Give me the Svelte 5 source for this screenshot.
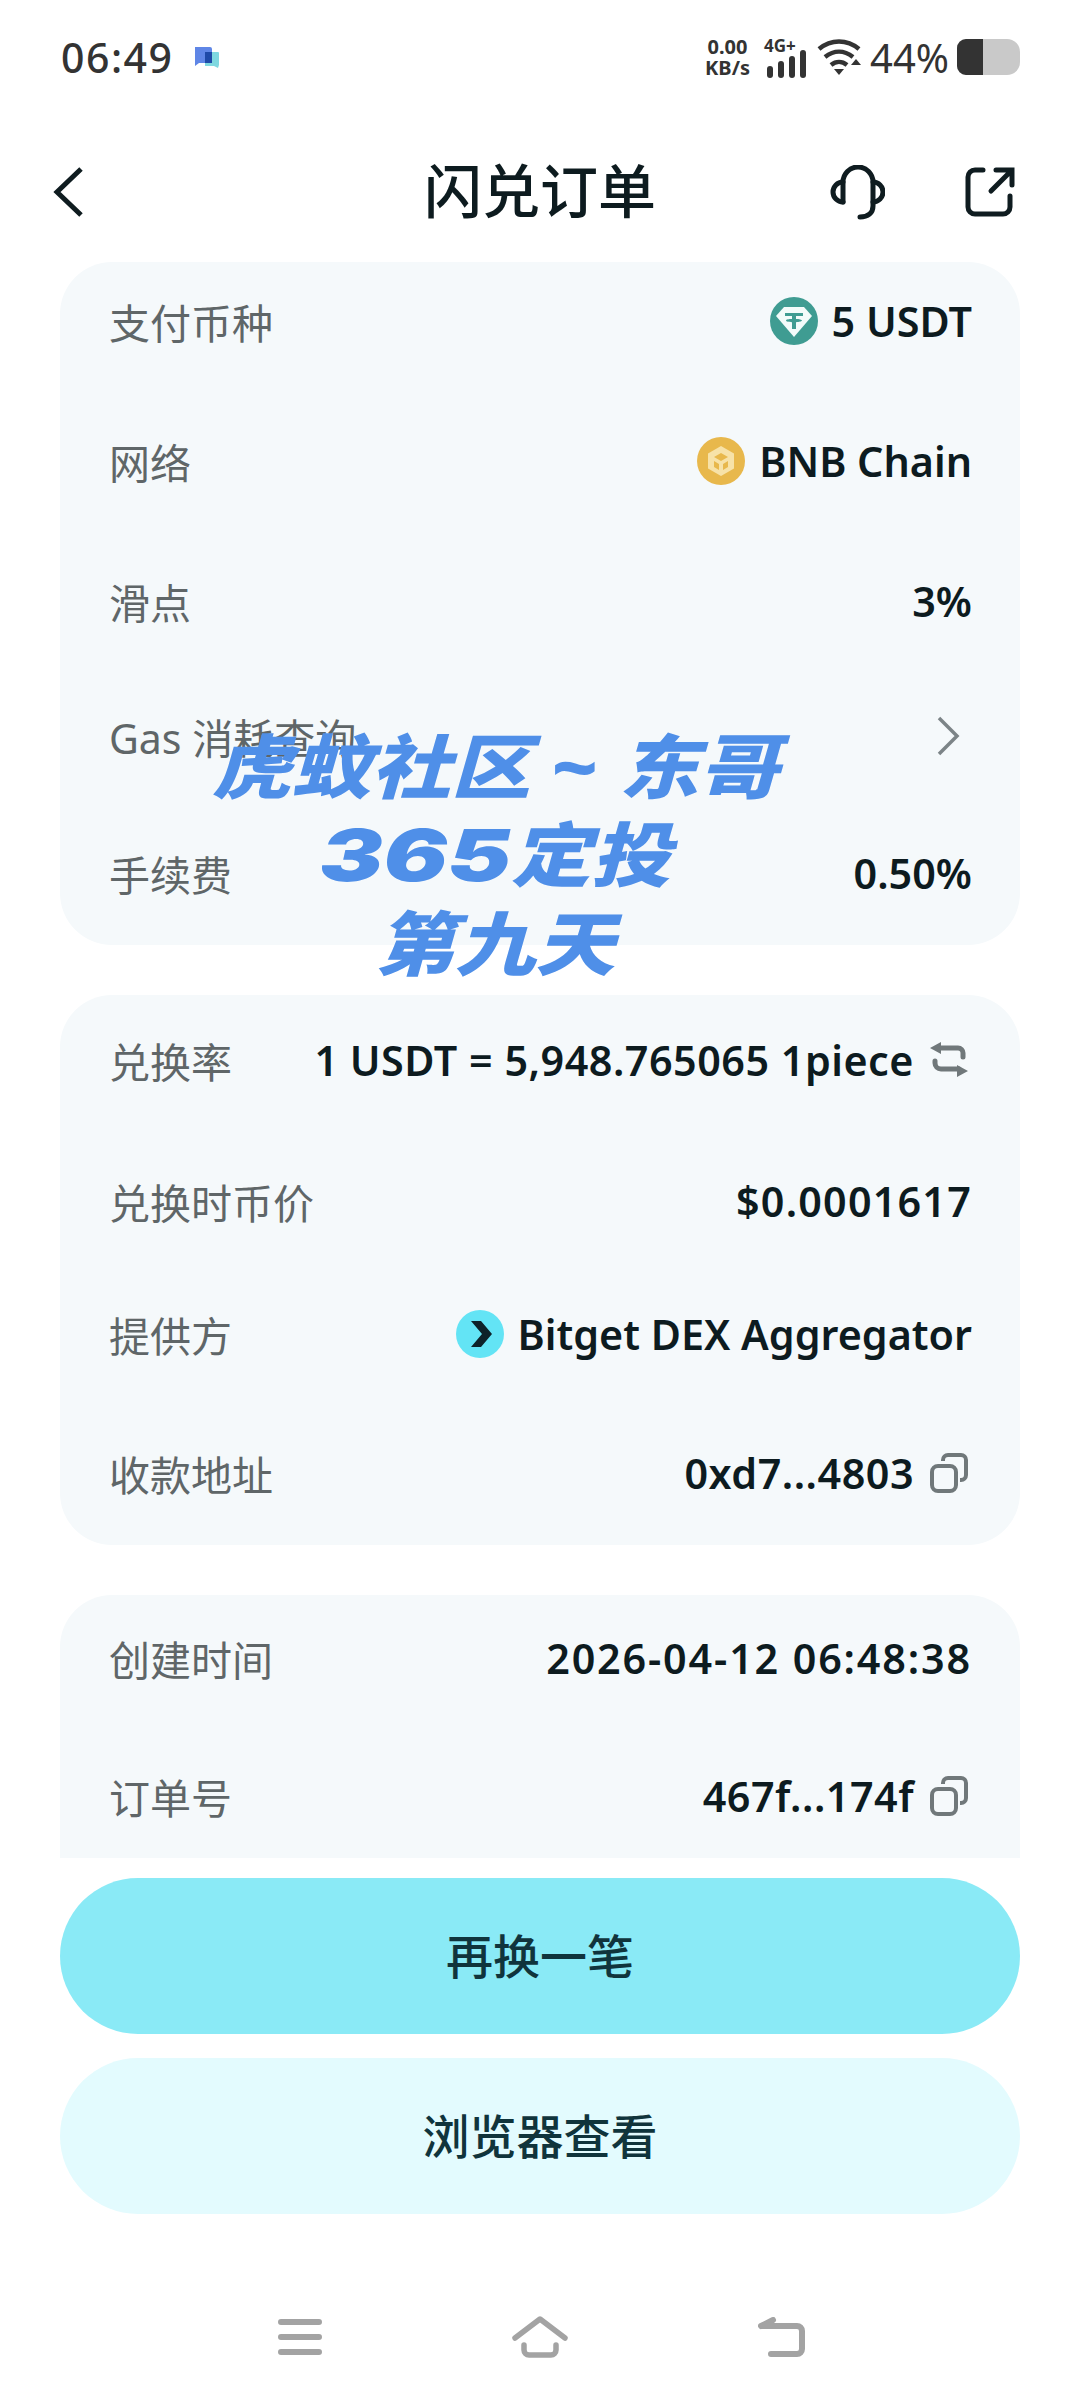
<script lang="ts">
  type Row = { label: string; value?: string; mt: number; icon?: string; after?: string; ls?: number };

  // mt is the space above each 100px row, the list rows are not evenly spaced
  // ls widens the digit-heavy values a little
  const cards: Row[][] = [
    [
      { label: '支付币种', value: '5 USDT', mt: 11, icon: 'usdt' },
      { label: '网络', value: 'BNB Chain', mt: 40, icon: 'bnb' },
      { label: '滑点', value: '3%', mt: 40 },
      { label: 'Gas 消耗查询', mt: 35, after: 'chevron' },
      { label: '手续费', mt: 37, value: '0.50%' },
    ],
    [
      { label: '兑换率', value: '1 USDT = 5,948.765065 1piece', mt: 17, after: 'swap', ls: 0.5 },
      { label: '兑换时币价', value: '$0.0001617', mt: 41, ls: 1.2 },
      { label: '提供方', value: 'Bitget DEX Aggregator', mt: 33, icon: 'bitget' },
      { label: '收款地址', value: '0xd7...4803', mt: 39, after: 'copy', ls: 0.5 },
    ],
    [
      { label: '创建时间', value: '2026-04-12 06:48:38', mt: 15, ls: 1.85 },
      { label: '订单号', value: '467f...174f', mt: 38, after: 'copy', ls: 0.5 },
    ],
  ];
</script>

<div class="page">
  <div class="status">
    <div class="status-left">
      <span class="time">06:49</span>
      <svg class="chat" viewBox="0 0 28 28" width="28" height="28">
        <path d="M2 4h15a2 2 0 0 1 2 2v12a2 2 0 0 1-2 2H6l-4 3z" fill="#5f86e6" />
        <path d="M12 9h13a1 1 0 0 1 1 1v12l-1 3-4-2H12z" fill="#7fd8e0" />
        <path d="M12 9h7v11h-7z" fill="#1f4aa8" />
      </svg>
    </div>
    <div class="status-right">
      <div class="speed"><span>0.00</span><span>KB/s</span></div>
      <div class="net">
        <span class="net-text">4G+</span>
        <svg viewBox="0 0 44 28" width="44" height="28">
          <rect x="3" y="16" width="6" height="12" rx="3" fill="#333" />
          <rect x="14" y="11" width="6" height="17" rx="3" fill="#333" />
          <rect x="25" y="6" width="6" height="22" rx="3" fill="#333" />
          <rect x="36" y="0" width="6" height="28" rx="3" fill="#333" />
        </svg>
      </div>
      <svg class="wifi" viewBox="0 0 46 38" width="46" height="38">
        <path d="M3 11C15 1 31 1 43 11" fill="none" stroke="#333" stroke-width="4.5" />
        <path d="M9 19c9-7 19-7 28 0" fill="none" stroke="#333" stroke-width="4.5" />
        <path d="M15 27c5-4 11-4 16 0" fill="none" stroke="#333" stroke-width="4.5" />
        <path d="M18 31h10l-5 6z" fill="#333" />
        <path d="M35 27l5 -6 5 6z" fill="#333" />
      </svg>
      <span class="battery-pct">44%</span>
      <div class="battery"><div class="battery-fill"></div></div>
    </div>
  </div>

  <header class="nav">
    <svg class="back" viewBox="0 0 32 52" width="32" height="52">
      <path d="M29 3L5 26l24 23" fill="none" stroke="#0f1c20" stroke-width="5" />
    </svg>
    <h1>闪兑订单</h1>
    <div class="nav-actions">
      <svg viewBox="0 0 55 55" width="55" height="55">
        <g fill="none" stroke="#0f1c20" stroke-width="5" stroke-linecap="round">
          <path d="M13 37V17a15 15 0 0 1 30 0v24c0 7-5 11-13 11" />
          <path d="M13 17a10 10 0 0 0 0 20" />
          <path d="M43 17a10 10 0 0 1 0 20" />
        </g>
      </svg>
      <svg viewBox="0 0 50 50" width="50" height="50">
        <g fill="none" stroke="#0f1c20" stroke-width="5" stroke-linecap="round">
          <path d="M18 3H10a7 7 0 0 0-7 7v30a7 7 0 0 0 7 7h28a7 7 0 0 0 7-7v-11" />
          <path d="M31 3h16v15M46 4L26 24" />
        </g>
      </svg>
    </div>
  </header>

  <main class="scroll">
    {#each cards as rows}
      <section class="card">
        {#each rows as row}
          <div class="row" style="margin-top: {row.mt}px">
            <span class="label">{row.label}</span>
            <span class="value">
              {#if row.icon === 'usdt'}
                <svg class="coin" viewBox="0 0 48 48" width="48" height="48">
                  <circle cx="24" cy="24" r="24" fill="#3f9c92" />
                  <path d="M14 10h20l8 9-18 21L6 19z" fill="#f2fbfa" />
                  <path d="M15 16h18v3h-7v3c3 0 6 .6 6 1.500S29 25 26 25.200V32h-4v-6.800C19 25 16 24.500 16 23.500S19 22 22 22v-3h-7z" fill="#3f9c92" />
                </svg>
              {:else if row.icon === 'bnb'}
                <svg class="coin" viewBox="0 0 48 48" width="48" height="48">
                  <circle cx="24" cy="24" r="24" fill="#e8b84c" />
                  <path d="M24 9l13 7.500v15L24 39l-13-7.500v-15z" fill="#f7e2a8" />
                  <path d="M24 16l7 4-7 4-7-4zM17 24l5 3v6l-5-3zM31 24l-5 3v6l5-3z" fill="#e8b84c" />
                </svg>
              {:else if row.icon === 'bitget'}
                <svg class="coin" viewBox="0 0 48 48" width="48" height="48">
                  <circle cx="24" cy="24" r="24" fill="#63e4f5" />
                  <path d="M15 11h10l11 13-11 13H15l11-13z" fill="#0d2229" />
                </svg>
              {/if}
              {#if row.value}<span style="letter-spacing: {row.ls ?? 0}px">{row.value}</span>{/if}
              {#if row.after === 'swap'}
                <svg class="tail" viewBox="0 0 38 36" width="38" height="36">
                  <path d="M8 6h20a5 5 0 0 1 5 5v4M5 19v2a6 6 0 0 0 6 6h18" fill="none" stroke="#70787a" stroke-width="5" stroke-linecap="round" />
                  <path d="M0 6L11 0v12zM38 29l-11-6v12z" fill="#70787a" />
                </svg>
              {:else if row.after === 'copy'}
                <svg class="tail" viewBox="0 0 38 40" width="38" height="40">
                  <rect x="2" y="13" width="24" height="25" rx="6" fill="none" stroke="#70787a" stroke-width="4" />
                  <path d="M13 8V7a5 5 0 0 1 5-5h13a5 5 0 0 1 5 5v15a5 5 0 0 1-5 5h-1" fill="none" stroke="#70787a" stroke-width="4" />
                </svg>
              {:else if row.after === 'chevron'}
                <svg class="chev" viewBox="0 0 24 40" width="24" height="40">
                  <path d="M3 2l18 18L3 38" fill="none" stroke="#7c8487" stroke-width="3.500" />
                </svg>
              {/if}
            </span>
          </div>
        {/each}
      </section>
    {/each}
  </main>

  <div class="actions">
    <button class="btn primary">再换一笔</button>
    <button class="btn secondary">浏览器查看</button>
  </div>

  <nav class="sysnav">
    <svg viewBox="0 0 44 36" width="44" height="36">
      <path d="M3 3h38M3 18h38M3 33h38" stroke="#a3a3a3" stroke-width="6" stroke-linecap="round" fill="none" />
    </svg>
    <svg viewBox="0 0 56 42" width="56" height="42">
      <path d="M3 22L28 3l25 19" stroke="#a3a3a3" stroke-width="5.500" fill="none" stroke-linecap="round" stroke-linejoin="round" />
      <path d="M12 29v5a5 5 0 0 0 5 5h22a5 5 0 0 0 5-5v-5" stroke="#a3a3a3" stroke-width="5.500" fill="none" stroke-linecap="round" />
    </svg>
    <svg viewBox="0 0 47 40" width="47" height="40">
      <path d="M4 9h35a5 5 0 0 1 5 5v18a5 5 0 0 1-5 5H13" stroke="#a3a3a3" stroke-width="6" fill="none" stroke-linecap="round" />
      <path d="M3 9L15 3" stroke="#a3a3a3" stroke-width="6" stroke-linecap="round" />
    </svg>
  </nav>

  <div class="watermark">
    <div>虎蚊社区 ~ 东哥</div>
    <div><span class="wm-num">365</span>定投</div>
    <div>第九天</div>
  </div>
</div>

<style>
  :global(body) {
    margin: 0;
    background: #fff;
  }

  .page {
    position: relative;
    width: 1080px;
    height: 2400px;
    display: flex;
    flex-direction: column;
    overflow: hidden;
    background: #fff;
    font-family: "Noto Sans", "Noto Sans CJK SC", sans-serif;
    color: #0d1b1f;
  }

  .status {
    height: 114px;
    box-sizing: border-box;
    padding: 0 60px 0 61px;
    display: flex;
    align-items: center;
    justify-content: space-between;
    color: #333;
  }

  .status-left {
    display: flex;
    align-items: center;
    gap: 20px;
  }

  .time {
    font-size: 41px;
    font-weight: 500;
    letter-spacing: 1.5px;
  }

  .status-right {
    display: flex;
    align-items: center;
  }

  .speed {
    display: flex;
    flex-direction: column;
    align-items: center;
    font-size: 20px;
    line-height: 21px;
    font-weight: 700;
    margin-right: 14px;
  }

  .net {
    width: 44px;
    display: flex;
    flex-direction: column;
  }

  .net svg {
    margin-top: -6px;
  }

  .net-text {
    font-size: 17px;
    line-height: 20px;
    font-weight: 700;
    white-space: nowrap;
  }

  .wifi {
    margin-left: 8px;
  }

  .battery-pct {
    font-size: 40px;
    margin-left: 8px;
    margin-right: 8px;
  }

  .battery {
    width: 63px;
    height: 36px;
    border-radius: 9px 13px 13px 9px;
    background: #c9c9c9;
    overflow: hidden;
  }

  .battery-fill {
    width: 26px;
    height: 100%;
    background: #333;
  }

  .nav {
    height: 148px;
    box-sizing: border-box;
    padding: 8px 65px 0 52px;
    display: flex;
    align-items: center;
    justify-content: space-between;
    position: relative;
  }

  .nav h1 {
    position: absolute;
    left: 0;
    right: 0;
    margin: -8px 0 0;
    text-align: center;
    font-size: 58px;
    font-weight: 500;
  }

  .nav-actions {
    display: flex;
    align-items: center;
    gap: 80px;
  }

  .scroll {
    height: 1596px;
    overflow: hidden;
    padding: 0 60px;
    display: flex;
    flex-direction: column;
    gap: 50px;
    flex: none;
  }

  .card {
    flex: none;
    background: #f5f9fb;
    border-radius: 52px;
    padding: 0 48px 20px 49px;
  }

  .card:last-child {
    padding-bottom: 80px;
  }

  .row {
    height: 100px;
    box-sizing: border-box;
    padding-bottom: 4px;
    display: flex;
    align-items: center;
    justify-content: space-between;
  }

  .label {
    font-size: 41px;
    color: #5f6668;
    white-space: nowrap;
  }

  .value {
    display: flex;
    align-items: center;
    gap: 10px;
    font-size: 41.3px;
    font-weight: 600;
    white-space: nowrap;
  }

  .coin {
    margin-right: 4px;
  }

  .tail {
    margin-left: 6px;
    margin-right: 4px;
  }

  .chev {
    margin-right: 12px;
  }

  .actions {
    padding: 20px 60px 0;
    display: flex;
    flex-direction: column;
    gap: 24px;
  }

  .btn {
    height: 156px;
    padding: 0 0 6px;
    border: none;
    border-radius: 78px;
    font-family: inherit;
    font-size: 47px;
    font-weight: 500;
    color: #10343c;
  }

  .primary {
    background: #8aeaf6;
  }

  .secondary {
    background: #e3fbfe;
  }

  .sysnav {
    margin-top: 100px;
    height: 46px;
    padding-left: 278px;
    display: flex;
    align-items: center;
    gap: 190px;
  }

  /* the overlay text is stretched wide in the reference */
  .watermark {
    position: absolute;
    left: 0;
    top: 722px;
    width: 990px;
    text-align: center;
    font-size: 70px;
    line-height: 88px;
    font-weight: 900;
    font-style: italic;
    color: #4f8fe8;
    transform: scaleX(1.14);
    transform-origin: 495px 0;
  }

  .wm-num {
    display: inline-block;
    font-family: "Inter", sans-serif;
    font-size: 72px;
    transform: scaleX(1.16);
    transform-origin: left;
    margin-right: 23px;
  }
</style>
